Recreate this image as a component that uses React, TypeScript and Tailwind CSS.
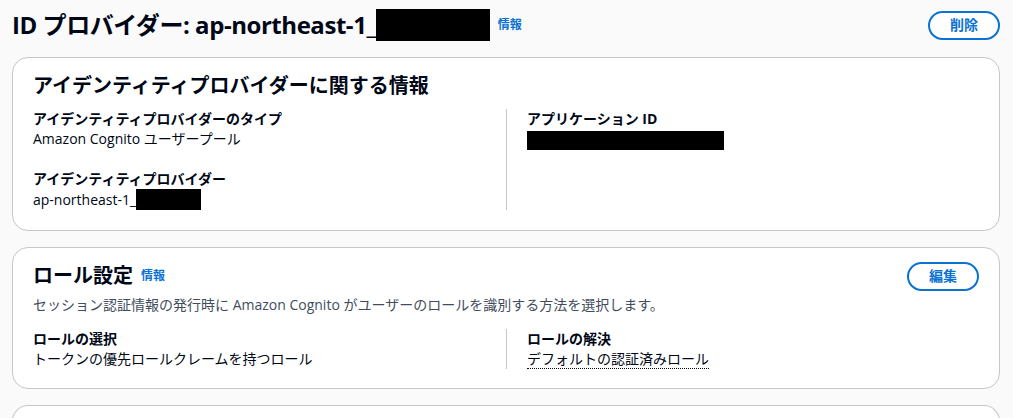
import React from 'react'

const font = 'font-["Open_Sans","Noto_Sans_CJK_JP",sans-serif]'

const Redact = ({ className }: { className: string }) => (
	<span className={`inline-block bg-black align-middle ${className}`} />
)

const InfoLink = () => (
	<a className="text-xs font-bold text-[#0972d3]">情報</a>
)

const OutlineButton = ({ children }: { children: React.ReactNode }) => (
	<button className="flex h-[29px] items-center rounded-[20px] border-2 border-[#0972d3] bg-white px-5 text-sm font-bold text-[#0972d3]">
		{children}
	</button>
)

const Field = ({ label, children }: { label: string; children: React.ReactNode }) => (
	<div className="flex flex-col">
		<span className="text-sm leading-5 font-bold text-[#000716]">{label}</span>
		<span className="text-sm leading-5 text-[#000716]">{children}</span>
	</div>
)

export default function App() {
	return (
		<div className={`h-screen overflow-hidden bg-[#fafafa] px-3 pt-[9px] pr-[13px] ${font}`}>
			<div className="flex h-8 items-center justify-between">
				<div className="flex items-center gap-2">
					<h1 className="flex items-center text-2xl leading-8 font-bold tracking-[-0.45px] text-[#000716]">
						ID プロバイダー: ap-northeast-1_
						<Redact className="h-8 w-[114px]" />
					</h1>
					<InfoLink />
				</div>
				<OutlineButton>削除</OutlineButton>
			</div>

			<section className="mt-4 rounded-2xl border border-[#c6c6cd] bg-white px-5 pt-4 pb-5">
				<h2 className="text-xl leading-6 font-bold text-[#000716]">
					アイデンティティプロバイダーに関する情報
				</h2>
				<div className="mt-[11px] grid grid-cols-2">
					<div className="flex flex-col gap-5 pr-5">
						<Field label="アイデンティティプロバイダーのタイプ">Amazon Cognito ユーザープール</Field>
						<Field label="アイデンティティプロバイダー">
							<span className="flex items-center">
								ap-northeast-1_
								<Redact className="h-[21px] w-[65px]" />
							</span>
						</Field>
					</div>
					<div className="border-l border-[#c6c6cd] pl-5">
						<Field label="アプリケーション ID">
							<Redact className="h-[19px] w-[197px]" />
						</Field>
					</div>
				</div>
			</section>

			<section className="mt-4 rounded-2xl border border-[#c6c6cd] bg-white px-5 pt-3 pb-[19px]">
				<div className="flex h-8 items-center justify-between">
					<div className="flex items-center gap-2">
						<h2 className="text-xl leading-6 font-bold text-[#000716]">ロール設定</h2>
						<InfoLink />
					</div>
					<OutlineButton>編集</OutlineButton>
				</div>
				<p className="mt-[3px] text-sm leading-5 text-[#414d5c]">
					セッション認証情報の発行時に Amazon Cognito がユーザーのロールを識別する方法を選択します。
				</p>
				<div className="mt-[14px] grid grid-cols-2">
					<div className="pr-5">
						<Field label="ロールの選択">トークンの優先ロールクレームを持つロール</Field>
					</div>
					<div className="border-l border-[#c6c6cd] pl-5">
						<Field label="ロールの解決">
							<span className="border-b border-dotted border-[#000716]">デフォルトの認証済みロール</span>
						</Field>
					</div>
				</div>
			</section>

			<section className="mt-4 h-10 rounded-t-2xl border border-b-0 border-[#c6c6cd] bg-white" />
		</div>
	)
}
